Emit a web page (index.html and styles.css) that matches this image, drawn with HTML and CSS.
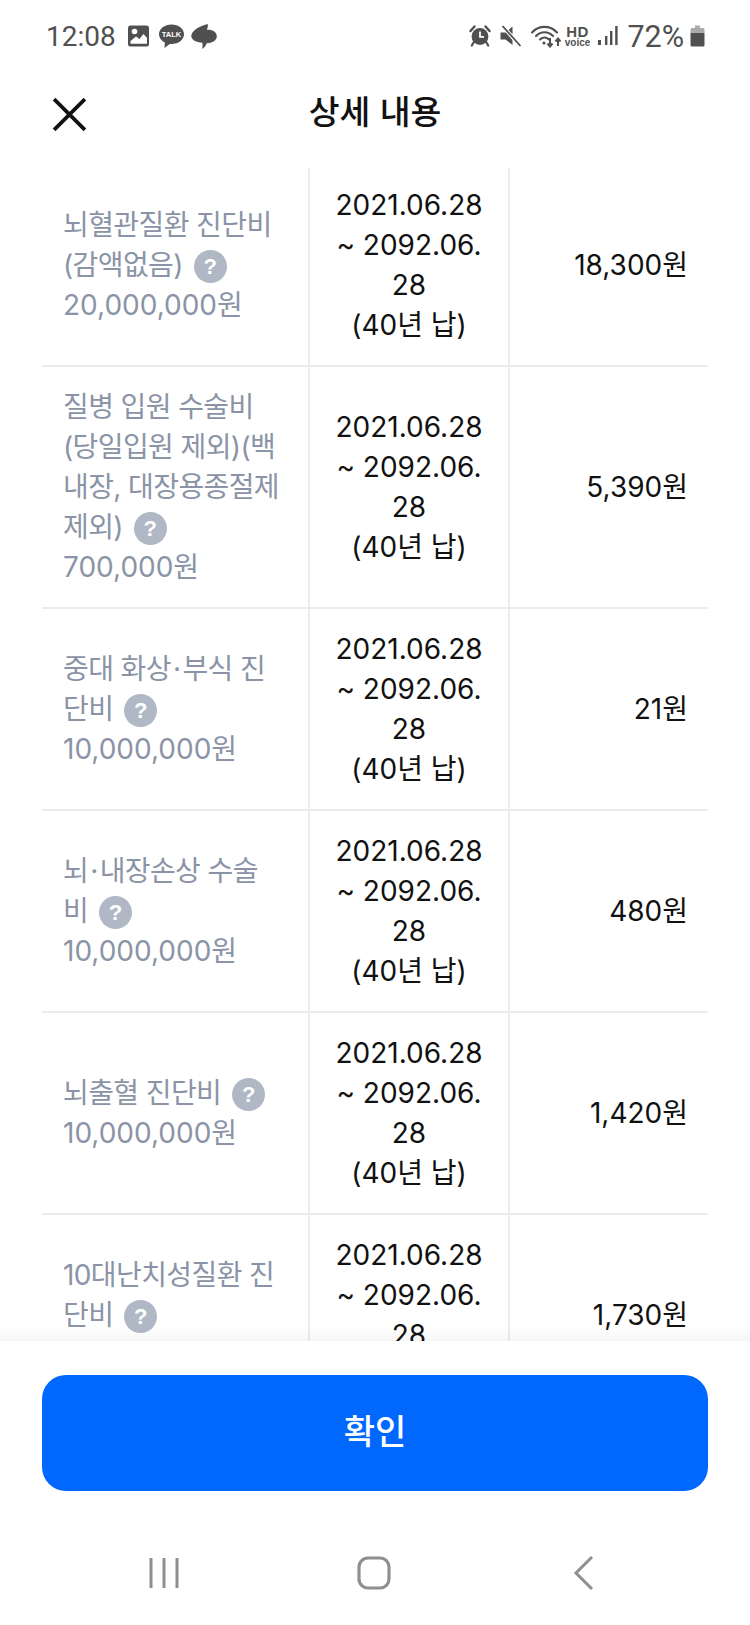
FILE: index.html
```html
<!DOCTYPE html>
<html lang="ko">
<head>
<meta charset="utf-8">
<title>상세 내용</title>
<link rel="stylesheet" href="styles.css">
</head>
<body>
<div class="phone">
  <div class="status">
    <div class="status-left">
      <span class="time">12:08</span>
      <svg class="ic" width="24" height="24" viewBox="0 0 24 24"><rect x="1" y="1.500" width="21" height="21" rx="2.500" fill="#505050"/><circle cx="7.500" cy="7.500" r="2.800" fill="#fff"/><path d="M3.500 19.800 L3.500 17 L9 12.500 L12.500 15 L16.500 10 L20 14 L20 19.800 Z" fill="#fff"/></svg>
      <svg class="ic" width="27" height="27" viewBox="0 0 27 27"><path d="M13.500 1.500C6.600 1.500 1 5.800 1 11.200c0 3.500 2.300 6.500 5.800 8.200L6.500 25l5.300-4.100c.6.100 1.100.1 1.700.1 6.900 0 12.500-4.300 12.500-9.800S20.400 1.500 13.500 1.500z" fill="#505050"/><text x="13.500" y="14.200" class="talk">TALK</text></svg>
      <svg class="ic spark" width="26" height="27" viewBox="0 0 28 28"><path d="M18 0.500 C18.500 2.500 18 4.500 17 6.700 C23 6.200 27.800 9 27.800 13.800 C27.800 18.300 23 21.200 17 21.200 C16 23.800 14 26.200 12 27.500 C12.500 25.500 12.500 23.200 12.300 20.800 C5.500 20.300 0.300 17.800 0.300 13.300 C0.300 8.300 8 3 18 0.500 Z" fill="#505050"/></svg>
    </div>
    <div class="status-right">
      <svg class="ic" width="22" height="22" viewBox="0 0 22 22"><path d="M1.500 6 L5.500 1.500 M20.500 6 L16.500 1.500" stroke="#505050" stroke-width="2.400" stroke-linecap="round"/><circle cx="11" cy="11.500" r="8.400" fill="#505050"/><path d="M11 6.500 V11.800 H15" stroke="#fff" stroke-width="1.800" fill="none"/><path d="M4.500 17.500 L2.800 20.500 M17.500 17.500 L19.200 20.500" stroke="#505050" stroke-width="2.200" stroke-linecap="round"/></svg>
      <svg class="ic" width="23" height="22" viewBox="0 0 22 22"><path d="M1 7.500 H6 L13 1.500 V20 L6 14.500 H1 Z" fill="#505050"/><path d="M2.500 0.500 L21 21" stroke="#fff" stroke-width="4"/><path d="M3 1 L21 21" stroke="#505050" stroke-width="1.800"/></svg>
      <svg class="ic wifi" width="31" height="24" viewBox="0 0 31 24"><path d="M1 8.500C8 1 19 1 26 8.500M5 12C10 7 17 7 22 12M9 15.500C11.800 13 15.200 13 18 15.500" fill="none" stroke="#505050" stroke-width="2.100" stroke-linecap="round"/><circle cx="13" cy="19" r="1.600" fill="#505050"/><path d="M19 14 V22 M16.500 19.500 L19 22.500 L21.500 19.500" fill="none" stroke="#505050" stroke-width="2"/><path d="M27 22 V15 M24.500 17.500 L27 14.500 L29.500 17.500" fill="none" stroke="#505050" stroke-width="2"/></svg>
      <span class="hd"><b>HD</b><i>voice</i></span>
      <svg class="ic signal" width="20" height="20" viewBox="0 0 20 20"><rect x="0" y="14" width="3" height="5" fill="#505050"/><rect x="7" y="10" width="2.400" height="9" fill="#505050"/><rect x="12" y="5" width="2.400" height="14" fill="#505050"/><rect x="17.200" y="0" width="2.400" height="19" fill="#505050"/></svg>
      <span class="pct">72%</span>
      <svg class="ic" width="15" height="22" viewBox="0 0 15 22"><path d="M5 0.500 H10 V3 H13 A1.500 1.500 0 0 1 14.500 4.500 V8 H0.500 V4.500 A1.500 1.500 0 0 1 2 3 H5 Z" fill="#aaa"/><path d="M0.500 8 H14.500 V20 A1.500 1.500 0 0 1 13 21.500 H2 A1.500 1.500 0 0 1 0.500 20 Z" fill="#505050"/></svg>
    </div>
  </div>

  <header class="top">
    <svg class="close" width="37" height="37" viewBox="0 0 36 36"><path d="M3 3 L33 33 M33 3 L3 33" stroke="#111" stroke-width="3.600"/></svg>
    <h1>상세 내용</h1>
  </header>

  <main class="scroll">
    <table class="grid">
      <colgroup><col class="c1"><col class="c2"><col class="c3"></colgroup>
      <tr>
        <td class="name"><span class="kr">뇌혈관질환 진단비<br>(감액없음)</span> <span class="q">?</span><br>20,000,000원</td>
        <td class="date">2021.06.28<br>~ 2092.06.<br>28<br>(40년 납)</td>
        <td class="amt">18,300원</td>
      </tr>
      <tr>
        <td class="name"><span class="kr">질병 입원 수술비<br>(당일입원 제외)(백<br>내장, 대장용종절제<br>제외)</span> <span class="q">?</span><br>700,000원</td>
        <td class="date">2021.06.28<br>~ 2092.06.<br>28<br>(40년 납)</td>
        <td class="amt">5,390원</td>
      </tr>
      <tr>
        <td class="name"><span class="kr">중대 화상<span class="dot">·</span>부식 진<br>단비</span> <span class="q">?</span><br>10,000,000원</td>
        <td class="date">2021.06.28<br>~ 2092.06.<br>28<br>(40년 납)</td>
        <td class="amt">21원</td>
      </tr>
      <tr>
        <td class="name"><span class="kr">뇌<span class="dot">·</span>내장손상 수술<br>비</span> <span class="q">?</span><br>10,000,000원</td>
        <td class="date">2021.06.28<br>~ 2092.06.<br>28<br>(40년 납)</td>
        <td class="amt">480원</td>
      </tr>
      <tr>
        <td class="name"><span class="kr">뇌출혈 진단비</span> <span class="q">?</span><br>10,000,000원</td>
        <td class="date">2021.06.28<br>~ 2092.06.<br>28<br>(40년 납)</td>
        <td class="amt">1,420원</td>
      </tr>
      <tr>
        <td class="name"><span class="kr">10대난치성질환 진<br>단비</span> <span class="q">?</span><br>10,000,000원</td>
        <td class="date">2021.06.28<br>~ 2092.06.<br>28<br>(40년 납)</td>
        <td class="amt">1,730원</td>
      </tr>
    </table>
  </main>

  <footer class="foot">
    <button class="ok">확인</button>
  </footer>

  <nav class="nav">
    <svg width="32" height="34" viewBox="0 0 32 34"><path d="M3 2 V32 M16 2 V32 M29 2 V32" stroke="#8f8f8f" stroke-width="3"/></svg>
    <svg width="34" height="34" viewBox="0 0 34 34"><rect x="2" y="2" width="30" height="30" rx="9" fill="none" stroke="#8f8f8f" stroke-width="3.200"/></svg>
    <svg width="22" height="36" viewBox="0 0 22 36"><path d="M19 2 L3 18 L19 34" fill="none" stroke="#8f8f8f" stroke-width="3"/></svg>
  </nav>
</div>
</body>
</html>
```
FILE: styles.css
```css
* { box-sizing: border-box; }
html, body { margin: 0; padding: 0; background: #fff; }
body { font-family: Inter, "Noto Sans CJK KR", sans-serif; color: #111; }
.phone { width: 750px; height: 1625px; display: flex; flex-direction: column; overflow: hidden; background: #fff; }

.status { height: 72px; flex: none; padding: 0 45px 0 46px; display: flex; justify-content: space-between; align-items: center; color: #505050; }
.status-left, .status-right { display: flex; align-items: center; }
.status-left { gap: 7px; }
.status-right { gap: 8px; }
.time { font-size: 28px; margin-right: 4px; font-family: Roboto, sans-serif; }
.pct { font-size: 30.500px; font-family: Roboto, sans-serif; margin: 0 -2px 0 1px; }
.ic { display: block; flex: none; }
.spark { margin-left: -1px; }
.wifi { margin-left: 1px; }
.talk { font: 700 7.500px "Liberation Sans", sans-serif; fill: #fff; text-anchor: middle; }
.hd { display: flex; flex-direction: column; align-items: center; font-family: "Liberation Sans", sans-serif; line-height: 1; margin-left: -5px; }
.hd b { font-size: 15px; line-height: 13px; letter-spacing: .5px; }
.hd i { font-size: 10px; line-height: 10px; font-style: normal; font-weight: 700; }

.top { height: 96px; flex: none; position: relative; display: flex; align-items: center; justify-content: center; padding-bottom: 22px; }
.close { position: absolute; left: 51px; top: 24px; }
.top h1 { margin: 0; font-size: 33.500px; font-weight: 500; color: #111; font-family: "Noto Sans CJK KR", sans-serif; }

.scroll { flex: 1; min-height: 0; overflow: hidden; }
.grid { margin: -3px 0 0 42px; width: 666px; border-collapse: collapse; table-layout: fixed; font-size: 28px; line-height: 40px; }
.c1 { width: 267px; } .c2 { width: 200px; } .c3 { width: 199px; }
.grid td { border: 2px solid #e9edf0; padding: 20px 0; vertical-align: middle; }
.grid tr td:first-child { border-left: 0; }
.grid tr td:last-child { border-right: 0; }
.grid tr:first-child td { border-top: 0; }
.name { color: #8a94a6; padding-left: 21px !important; padding-right: 8px !important; white-space: nowrap; }
.kr { letter-spacing: -.6px; }
.date { text-align: center; color: #111; white-space: nowrap; }
.amt { text-align: right; padding-right: 20px !important; color: #111; }
.q { display: inline-block; width: 33px; height: 33px; border-radius: 50%; background: #b0b7c5; color: #fff; font: 700 22px/33px "Liberation Sans", sans-serif; text-align: center; vertical-align: 1px; margin: -6px 0 -6px 3px; }
.dot { margin: 0 2px; }

.foot { flex: none; height: 150px; position: relative; background: #fff; padding: 34px 42px 0; }
.foot::before { content: ""; position: absolute; left: 0; right: 0; top: -14px; height: 14px; background: linear-gradient(rgba(0,0,0,0), rgba(0,0,0,.035)); }
.ok { width: 100%; height: 116px; border: 0; border-radius: 24px; background: #0068ff; color: #fff; font: 500 34px "Noto Sans CJK KR", sans-serif; display: block; padding: 0 0 8px; }

.nav { flex: none; height: 134px; position: relative; }
.nav svg { display: block; position: absolute; }
.nav svg:nth-child(1) { left: 148px; top: 65px; }
.nav svg:nth-child(2) { left: 357px; top: 65px; }
.nav svg:nth-child(3) { left: 573px; top: 64px; }
```
